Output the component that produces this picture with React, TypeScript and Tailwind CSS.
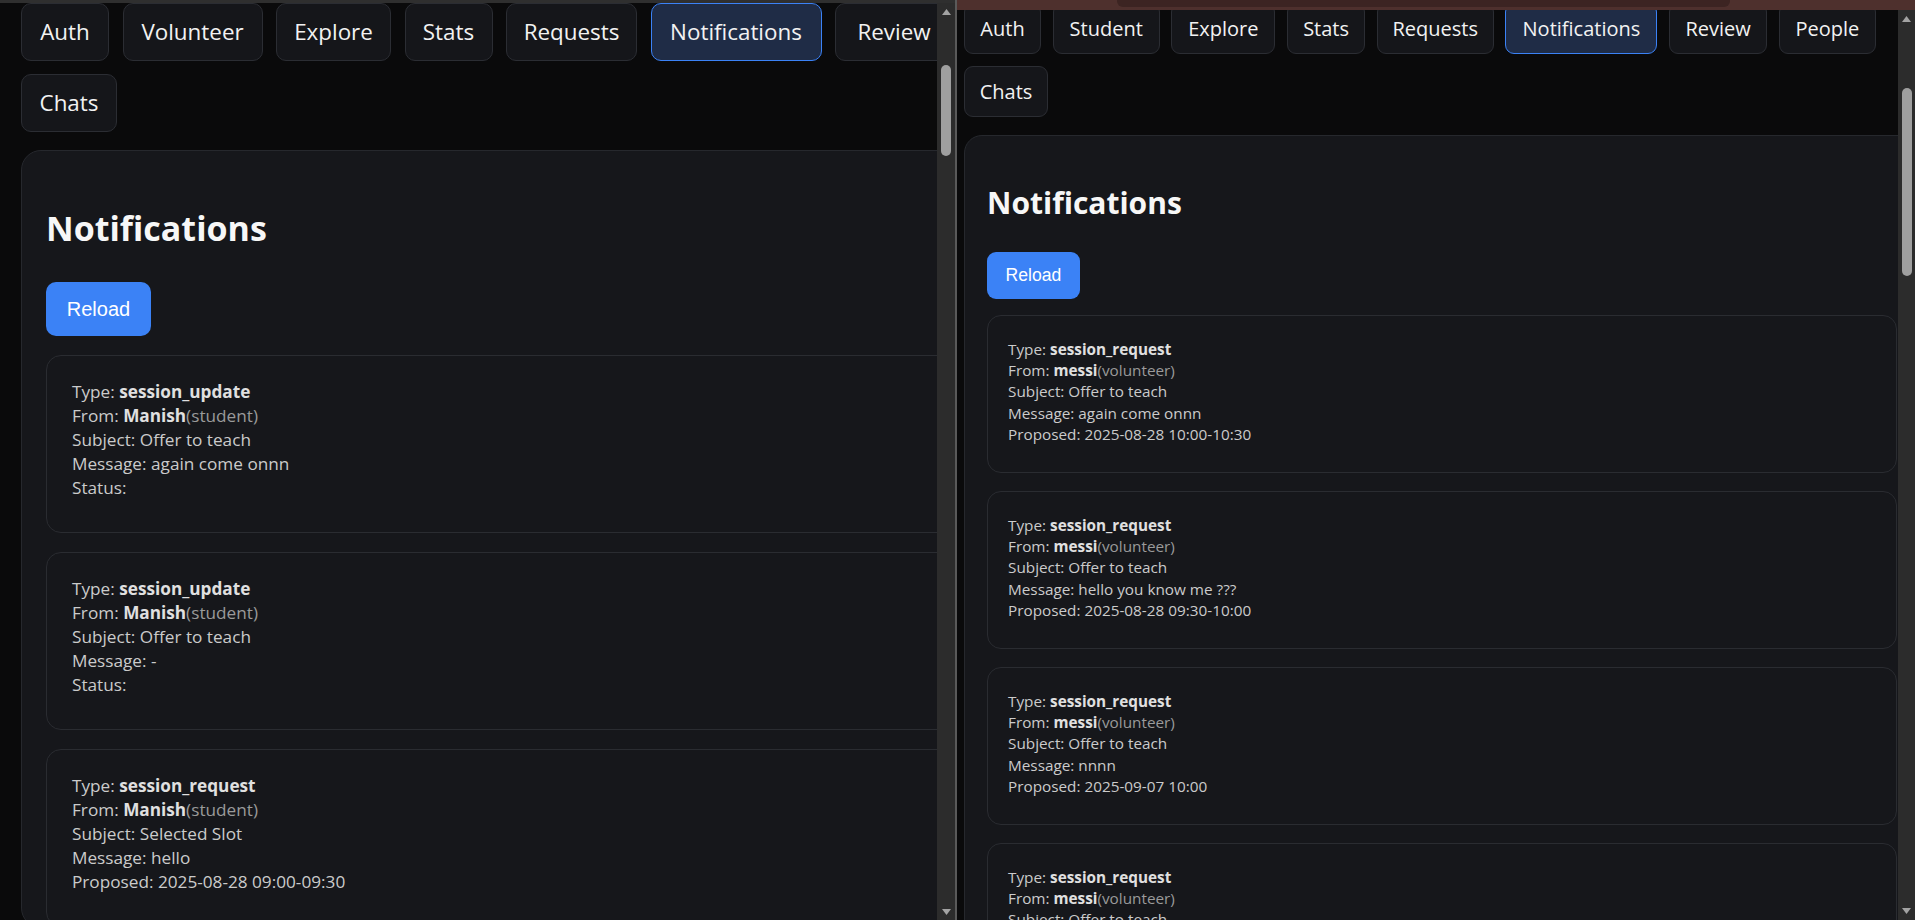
import React from 'react';

type Note = {
  type: string;
  from: string;
  role: string;
  subject: string;
  message: string;
  last: string;
};

const leftNav = [
  { label: 'Auth', w: 'w-[88px]' },
  { label: 'Volunteer', w: 'w-[140px]' },
  { label: 'Explore', w: 'w-[115px]' },
  { label: 'Stats', w: 'w-[88px]' },
  { label: 'Requests', w: 'w-[131px]' },
  { label: 'Notifications', w: 'w-[171px]', active: true },
  { label: 'Review', w: 'w-[118px]' },
];

const rightNav = [
  { label: 'Auth', w: 'w-[77px]' },
  { label: 'Student', w: 'w-[107px]' },
  { label: 'Explore', w: 'w-[104px]' },
  { label: 'Stats', w: 'w-[78px]' },
  { label: 'Requests', w: 'w-[117px]' },
  { label: 'Notifications', w: 'w-[152px]', active: true },
  { label: 'Review', w: 'w-[98px]' },
  { label: 'People', w: 'w-[97px]' },
];

const leftNotes: Note[] = [
  { type: 'session_update', from: 'Manish', role: 'student', subject: 'Offer to teach', message: 'again come onnn', last: 'Status: ' },
  { type: 'session_update', from: 'Manish', role: 'student', subject: 'Offer to teach', message: '-', last: 'Status: ' },
  { type: 'session_request', from: 'Manish', role: 'student', subject: 'Selected Slot', message: 'hello', last: 'Proposed: 2025-08-28 09:00-09:30' },
];

const rightNotes: Note[] = [
  { type: 'session_request', from: 'messi', role: 'volunteer', subject: 'Offer to teach', message: 'again come onnn', last: 'Proposed: 2025-08-28 10:00-10:30' },
  { type: 'session_request', from: 'messi', role: 'volunteer', subject: 'Offer to teach', message: 'hello you know me ???', last: 'Proposed: 2025-08-28 09:30-10:00' },
  { type: 'session_request', from: 'messi', role: 'volunteer', subject: 'Offer to teach', message: 'nnnn', last: 'Proposed: 2025-09-07 10:00' },
  { type: 'session_request', from: 'messi', role: 'volunteer', subject: 'Offer to teach', message: 'hi', last: 'Proposed: 2025-09-07 10:30' },
];

function Arrow({ down }: { down?: boolean }) {
  return (
    <svg width="9" height="6" viewBox="0 0 9 6" className="shrink-0">
      <polygon points={down ? '0,0 9,0 4.5,6' : '0,6 4.5,0 9,6'} fill="#a3a3a3" />
    </svg>
  );
}

function NoteCard({ note, big }: { note: Note; big: boolean }) {
  return (
    <div
      className={
        big
          ? 'rounded-[15px] border border-[#2a2c31] bg-[#16171b] pt-[24px] pb-[32px] pl-[25px] text-[17.2px] leading-[24px] text-[#cbcbcb]'
          : 'rounded-[14px] border border-[#2a2c31] bg-[#16171b] pt-[23px] pb-[27px] pl-[20px] text-[15.3px] leading-[21.2px] text-[#cbcbcb]'
      }
    >
      <div>
        Type: <b className="font-bold text-[#e0e0e0]">{note.type}</b>
      </div>
      <div>
        From: <b className="font-bold text-[#e0e0e0]">{note.from}</b>
        <span className="text-[#9a9a9a]">({note.role})</span>
      </div>
      <div>Subject: {note.subject}</div>
      <div>Message: {note.message}</div>
      <div>{note.last}</div>
    </div>
  );
}

function Pane({ big }: { big: boolean }) {
  const nav = big ? leftNav : rightNav;
  const notes = big ? leftNotes : rightNotes;
  const btn = big
    ? 'flex h-[58px] shrink-0 items-center justify-center overflow-hidden rounded-[10px] border text-[22.4px]'
    : 'flex h-[51px] shrink-0 items-center justify-center overflow-hidden rounded-[9px] border text-[20px]';

  return (
    <div className="font-['Open_Sans',sans-serif] text-[#f2f2f2]">
      {/* tab bar */}
      <div className={big ? 'flex gap-[13.5px]' : 'flex gap-[11.7px]'}>
        {nav.map((n) => (
          <button
            key={n.label}
            className={`${btn} ${n.w} ${
              n.active ? 'border-[#3b82f6] bg-[#1f2c46]' : 'border-[#2b2d33] bg-[#15161a]'
            }`}
          >
            {n.label}
          </button>
        ))}
      </div>
      <div className={big ? 'mt-[12.5px] flex' : 'mt-[12px] flex'}>
        <button className={`${btn} ${big ? 'w-[96px]' : 'w-[84px]'} border-[#2b2d33] bg-[#15161a]`}>Chats</button>
      </div>

      {/* notifications panel */}
      <div
        className={
          big
            ? 'mt-[18.5px] w-[1000px] rounded-[20px] border border-[#26282d] bg-[#16171b] pt-[55px] pr-[24px] pl-[24px]'
            : 'mt-[18px] w-[956px] rounded-[18px] border border-[#26282d] bg-[#16171b] pt-[48px] pr-[22px] pl-[22px]'
        }
      >
        <h2
          className={
            big
              ? 'text-[34px] leading-[44px] font-bold text-[#f7f7f7]'
              : 'text-[30px] leading-[38px] font-bold text-[#f7f7f7]'
          }
        >
          Notifications
        </h2>
        <button
          className={
            big
              ? "mt-[32px] h-[54px] w-[105px] rounded-[10px] bg-[#3b82f6] font-['Liberation_Sans',Arial,sans-serif] text-[20px] text-white"
              : "mt-[30px] h-[47px] w-[93px] rounded-[9px] bg-[#3b82f6] font-['Liberation_Sans',Arial,sans-serif] text-[17.6px] text-white"
          }
        >
          Reload
        </button>
        <div className={big ? 'mt-[19px] flex flex-col gap-[19px]' : 'mt-[16px] flex flex-col gap-[18px]'}>
          {notes.map((n, i) => (
            <NoteCard key={i} note={n} big={big} />
          ))}
        </div>
      </div>
    </div>
  );
}

export default function App() {
  return (
    <div className="flex h-[920px] w-[1915px] overflow-hidden bg-[#0a0a0b]">
      {/* left window */}
      <div className="flex h-full w-[955px] shrink-0 flex-col">
        <div className="h-[3px] bg-[#2f2f2f]" />
        <div className="flex min-h-0 flex-1">
          <div className="w-[937px] shrink-0 overflow-hidden pl-[21px]">
            <Pane big />
          </div>
          <div className="flex w-[18px] flex-col items-center bg-[#2c2c2c] pt-[6px] pb-[5px]">
            <Arrow />
            <div className="mt-[50px] h-[91px] w-[10px] rounded-full bg-[#9f9f9f]" />
            <div className="flex-1" />
            <Arrow down />
          </div>
        </div>
      </div>

      <div className="w-[2px] shrink-0 bg-[#5a5a5a]" />

      {/* right window */}
      <div className="relative flex h-full w-[958px] shrink-0">
        <div className="w-[941px] shrink-0 overflow-hidden pt-[3px] pl-[7px]">
          <Pane big={false} />
        </div>
        <div className="flex w-[17px] flex-col items-center bg-[#2c2c2c] pt-[16px] pb-[6px]">
          <Arrow />
          <div className="mt-[66px] h-[188px] w-[10px] rounded-full bg-[#9f9f9f]" />
          <div className="flex-1" />
          <Arrow down />
        </div>
        <div className="absolute inset-x-0 top-0 flex h-[10px] bg-[#4e302d]">
          <div className="ml-[160px] h-[7px] w-[613px] rounded-b-[6px] bg-[#3c2422]" />
        </div>
      </div>
    </div>
  );
}
